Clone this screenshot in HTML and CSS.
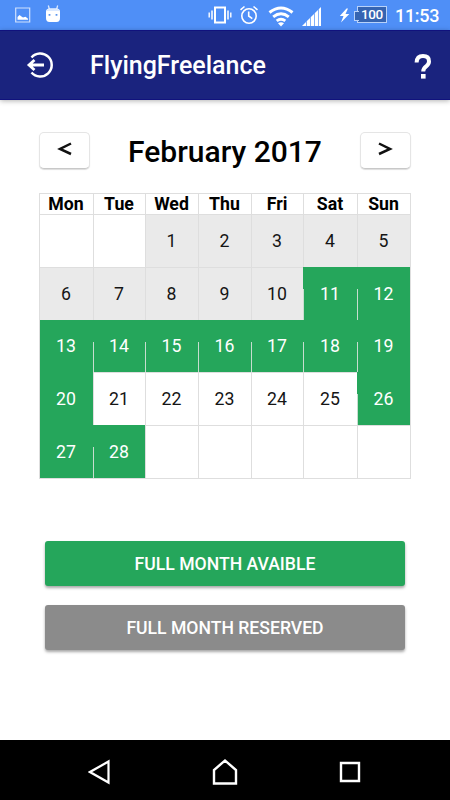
FILE: index.html
```html
<!DOCTYPE html>
<html lang="en">
<head>
<meta charset="utf-8">
<title>FlyingFreelance</title>
<link rel="stylesheet" href="styles.css">
</head>
<body>
<div class="status">
  <svg class="picture" width="16" height="16" viewBox="0 0 16 16"><path d="M.7 1h14v14H.7z" fill="none" stroke="#cfe1fd" stroke-width="1.2"/><path d="M2.500 12.700V10l2-2 2 1.500 1.500 1 2.500-.8 2.500 2v1z" fill="#fff"/></svg>
  <svg class="droid" width="16" height="18" viewBox="0 0 16 18"><path d="M3.300.5l1.200 4M12.700.5l-1.200 4" stroke="#d8e8ff" stroke-width="1.300"/><path d="M1 7q0-3.500 3.500-3.500h7Q15 3.500 15 7v6q0 4-3.500 4h-7Q1 17 1 13z" fill="#fff"/><path d="M1.500 5q1-1.500 3-1.500h7q2 0 3 1.500v1h-13z" fill="#dbe9ff"/><path d="M3.600 9h1.800v1.800H3.600zM10.600 9h1.800v1.800h-1.800z" fill="#5b94ed"/></svg>
  <svg class="vibrate" width="24" height="18" viewBox="0 0 24 18"><path d="M7 1.500h10v15H7z" fill="none" stroke="#fff" stroke-width="2"/><path d="M4 4.500v9M20 4.500v9" stroke="#fff" stroke-width="1.500"/><path d="M1.200 6.500v5M22.800 6.500v5" stroke="#fff" stroke-width="1.400"/></svg>
  <svg class="alarm" width="20" height="20" viewBox="0 0 20 20"><g fill="none" stroke="#fff" stroke-width="1.600"><circle cx="10" cy="11" r="7.200"/><path d="M1.500 4.800L5.500 1.500M18.500 4.800l-4-3.300M9.700 6.500V11l3.600 2.600"/></g></svg>
  <svg class="wifi" width="26" height="21" viewBox="0 0 26 21"><g fill="none" stroke="#fff" stroke-width="3"><path d="M1.500 6.500Q13-2.500 24.500 6.500"/><path d="M5.200 10.800q7.800-6.200 15.600 0"/><path d="M8.700 14.900q4.300-3.400 8.600 0"/></g><path d="M10 17.200q3-1.800 6 0L13 20.500z" fill="#fff"/></svg>
  <svg class="signal" width="20" height="19" viewBox="0 0 20 19"><path d="M0 19l4-4v4zM4.700 14.300l3.300-3.300v8H4.700zM8.700 10.300L12 7v12H8.700zM12.700 6.300L16 3v16h-3.300zM16.700 2.300L19 0v19h-2.300z" fill="#fff"/></svg>
  <svg class="bolt" width="11" height="15" viewBox="0 0 11 15"><path d="M7.500.5L.8 8h3.700L2 14.500 10.300 6H6.500L9 .5z" fill="#fff"/></svg>
  <div class="battery">100</div>
  <div class="clock">11:53</div>
</div>
<header class="bar">
  <svg class="exit" width="28" height="28" viewBox="0 0 28 28"><g fill="none" stroke="#fff" stroke-width="2.500"><path d="M5.500 6.500A11.500 11.500 0 1 1 5.500 21.500"/><path d="M3 14h15M8.500 9L3 14l5.500 5" stroke-width="2.800"/></g></svg>
  <h1 class="brand">FlyingFreelance</h1>
  <svg class="help" width="18" height="26" viewBox="0 0 18 26"><path d="M2.600 8.500Q2.900 2.100 9 2.100q6 0 6 5.300 0 2.600-2.600 4.700-3.200 2.400-3.200 5.400" fill="none" stroke="#fff" stroke-width="4"/><path d="M7 20h4.600v4.600H7z" fill="#fff"/></svg>
</header>
<main class="content">
  <div class="month">
    <button class="step"><svg width="16" height="14" viewBox="0 0 16 14"><path d="M14 1.500L3 7l11 5" fill="none" stroke="#111" stroke-width="2.500"/></svg></button>
    <h2 class="title">February 2017</h2>
    <button class="step"><svg width="16" height="14" viewBox="0 0 16 14"><path d="M2 1.500L13 7 2 12" fill="none" stroke="#111" stroke-width="2.500"/></svg></button>
  </div>
  <div class="calendar">
    <b class="day">Mon</b><b class="day">Tue</b><b class="day">Wed</b><b class="day">Thu</b><b class="day">Fri</b><b class="day">Sat</b><b class="day">Sun</b>
    <div class="cell"></div><div class="cell"></div><div class="cell past">1</div><div class="cell past">2</div><div class="cell past">3</div><div class="cell past">4</div><div class="cell past">5</div>
    <div class="cell past">6</div><div class="cell past">7</div><div class="cell past">8</div><div class="cell past">9</div><div class="cell past">10</div><div class="cell free">11</div><div class="cell free">12</div>
    <div class="cell free first">13</div><div class="cell free">14</div><div class="cell free">15</div><div class="cell free">16</div><div class="cell free">17</div><div class="cell free">18</div><div class="cell free">19</div>
    <div class="cell free first">20</div><div class="cell">21</div><div class="cell">22</div><div class="cell">23</div><div class="cell">24</div><div class="cell">25</div><div class="cell free">26</div>
    <div class="cell free first">27</div><div class="cell free">28</div><div class="cell"></div><div class="cell"></div><div class="cell"></div><div class="cell"></div><div class="cell"></div>
  </div>
  <div class="actions">
    <button class="action available">FULL MONTH AVAIBLE</button>
    <button class="action reserved">FULL MONTH RESERVED</button>
  </div>
</main>
<nav class="nav">
  <svg width="24" height="28" viewBox="0 0 24 28"><path d="M20.500 3.500v21L2 14z" fill="none" stroke="#fff" stroke-width="2.200"/></svg>
  <svg width="28" height="28" viewBox="0 0 28 28"><path d="M3 25.500V12L14 2.500 25 12v13.500z" fill="none" stroke="#fff" stroke-width="2.400"/></svg>
  <svg width="24" height="28" viewBox="0 0 24 28"><path d="M3 5h18v18H3z" fill="none" stroke="#fff" stroke-width="2.400"/></svg>
</nav>
</body>
</html>
```
FILE: styles.css
```css
* { box-sizing: border-box; }
body {
  margin: 0;
  width: 450px;
  height: 800px;
  display: flex;
  flex-direction: column;
  overflow: hidden;
  background: #fff;
  color: #000;
  font-family: Roboto, "Liberation Sans", sans-serif;
}
svg { display: block; flex: none; }
button { font-family: inherit; padding: 0; border: 0; }
.status {
  height: 30px;
  flex: none;
  display: flex;
  align-items: center;
  padding-left: 15px;
  background: #4f8ff7;
  color: #fff;
}
.droid { margin: -3px 0 0 14px; }
.vibrate { margin-left: 147px; }
.alarm { margin-left: 7px; }
.wifi { margin: 2px 0 0 9px; }
.signal { margin: 2px 0 0 8px; }
.bolt { margin-left: 17px; }
.battery {
  position: relative;
  width: 30px;
  height: 17px;
  margin: -1px 0 0 7px;
  border: 1px solid #b8d2fa;
  background: #3564b2;
  font-size: 13.500px;
  font-weight: 500;
  letter-spacing: -.4px;
  line-height: 15px;
  text-align: center;
}
.battery::before {
  content: "";
  position: absolute;
  left: -4px;
  top: 4px;
  width: 4px;
  height: 8px;
  border: 1px solid #b8d2fa;
  border-right: 0;
  background: #3564b2;
}
.clock { margin: 2px 0 0 8px; font-size: 18px; font-weight: 500; line-height: 20px; letter-spacing: -.3px; }
.bar {
  height: 70px;
  flex: none;
  display: flex;
  align-items: center;
  padding: 0 18px 0 26px;
  border-top: 1px solid #10127d;
  border-bottom: 1px solid #10127d;
  background: #1a237e;
  box-shadow: 0 1px 5px rgba(0, 0, 0, .3);
}
.help { margin-top: 3px; }
.brand {
  flex: 1;
  margin: 0 0 0 36px;
  color: #fff;
  font-size: 25px;
  font-weight: 500;
}
.content { flex: 1; padding: 32px 39px 0; }
.month { display: flex; justify-content: space-between; }
.step {
  width: 51px;
  height: 37px;
  display: flex;
  justify-content: center;
  padding-top: 9px;
  border: 1px solid #e5e5e5;
  border-bottom-color: #c8c8c8;
  border-radius: 5px;
  background: #fff;
  box-shadow: 0 1px 1px #ddd;
}
.title { margin: 0; font-size: 30px; font-weight: 500; line-height: 40px; }
.calendar {
  width: 372px;
  display: grid;
  grid-template-columns: 54px 52px 53px 53px 52px 54px 53px;
  grid-template-rows: 21px 53px 53px 52px 53px 53px;
  margin-top: 21px;
  border: solid #dedede;
  border-width: 0 1px 1px 0;
}
.day, .cell {
  display: flex;
  align-items: center;
  justify-content: center;
  padding: 0 1px 1px 0;
  border: solid #dedede;
  border-width: 1px 0 0 1px;
  font-size: 17.700px;
}
.day { font-weight: 700; }
.cell { color: #151515; }
.past { background: #eaeaea; }
.free {
  position: relative;
  border-color: #25a65b;
  background: #25a65b;
  color: #fff;
}
.free::before {
  content: "";
  position: absolute;
  left: -1px;
  top: 21px;
  bottom: 0;
  width: 1px;
  background: #c7ddcf;
}
.first { padding-top: 1px; border-top: 0; border-left-color: #dedede; }
.first::before { display: none; }
.actions {
  display: flex;
  flex-direction: column;
  gap: 19px;
  margin: 62px 6px 0;
}
.action {
  height: 45px;
  border-radius: 3px;
  color: #fff;
  font-size: 17.600px;
  font-weight: 500;
  box-shadow: 0 2px 3px rgba(0, 0, 0, .35);
}
.available { background: #25a65b; }
.reserved { background: #8b8b8b; }
.nav {
  height: 60px;
  flex: none;
  display: flex;
  align-items: center;
  justify-content: space-between;
  padding: 4px 88px 0;
  background: #000;
}
```
